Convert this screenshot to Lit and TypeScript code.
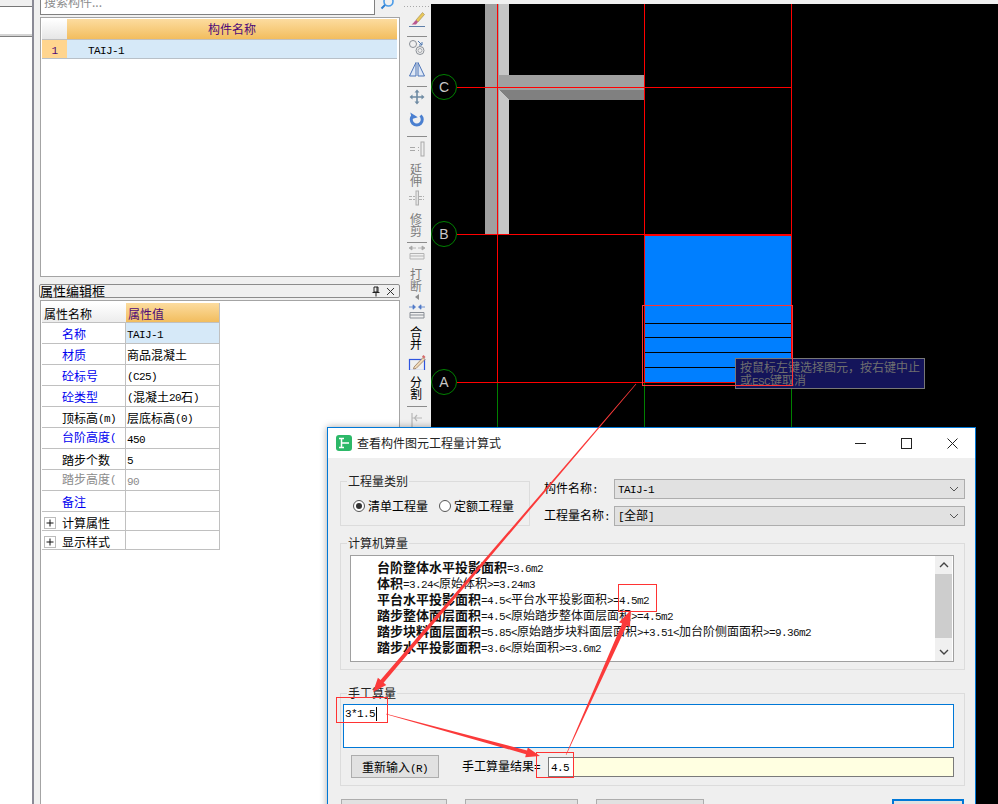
// app.ts - stair quantity dialog over the CAD drawing view
import { LitElement, html, css, svg } from 'lit';
import { customElement } from 'lit/decorators.js';

// the reference uses a half-width Latin next to 12px CJK, so ASCII runs get their own condensed mono span
const mix = (text: string) =>
  text.split(/([\x21-\x7e]+)/).map((part, i) => (i % 2 ? html`<span class="m">${part}</span>` : part));

interface PropRow {
  name: string;
  value?: string;
  tone?: 'blue' | 'gray' | 'black';
  up?: boolean;
  fold?: boolean;
  active?: boolean;
}

const PROPS: PropRow[] = [
  { name: '名称', value: 'TAIJ-1', tone: 'blue', active: true },
  { name: '材质', value: '商品混凝土', tone: 'blue' },
  { name: '砼标号', value: '(C25)', tone: 'blue' },
  { name: '砼类型', value: '(混凝土20石)', tone: 'blue' },
  { name: '顶标高(m)', value: '层底标高(0)' },
  { name: '台阶高度(', value: '450', tone: 'blue', up: true },
  { name: '踏步个数', value: '5' },
  { name: '踏步高度(', value: '90', tone: 'gray', up: true },
  { name: '备注', tone: 'blue' },
  { name: '计算属性', fold: true },
  { name: '显示样式', fold: true }
];

const LINES: [string, string][] = [
  ['台阶整体水平投影面积', '=3.6m2'],
  ['体积', '=3.24<原始体积>=3.24m3'],
  ['平台水平投影面积', '=4.5<平台水平投影面积>=4.5m2'],
  ['踏步整体面层面积', '=4.5<原始踏步整体面层面积>=4.5m2'],
  ['踏步块料面层面积', '=5.85<原始踏步块料面层面积>+3.51<加台阶侧面面积>=9.36m2'],
  ['踏步水平投影面积', '=3.6<原始面积>=3.6m2']
];

const icon = (body: unknown, h = 16) =>
  html`<svg class="ico" width="18" height=${h} viewBox="0 0 18 ${h}" fill="none">${body}</svg>`;

const ICONS = {
  brush: svg`<path d="M1 15.5H17" stroke="#5f7fa8"/><path d="M8 9L14.5 1.5L16.5 3.5L10 11Z" fill="#e9c85a" stroke="#a08a50" stroke-width=".6"/><path d="M8 9L10 11L8 13.5H3.5C5.5 12.5 6 10.5 8 9Z" fill="#b9578f"/>`,
  offset: svg`<circle cx="5" cy="5" r="3.5" stroke="#8a8f96"/><path d="M10 2L14 6M14 3V6H11" stroke="#4f78b0"/><circle cx="12" cy="11.5" r="4" stroke="#8a8f96"/><circle cx="12" cy="11.5" r="2" stroke="#a5a9ae"/>`,
  mirror: svg`<path d="M8 1.5V15H1.5Z" fill="#dfe8f6" stroke="#4b74b8"/><path d="M10 1.5V15H16.5Z" fill="#dfe8f6" stroke="#4b74b8"/>`,
  move: svg`<path d="M9 2V14M3 8H15" stroke="#6f8ba3" stroke-width="1.6"/><path d="M9 0.5L11.5 3.5H6.5ZM9 15.5L6.5 12.5H11.5ZM1.5 8L4.5 5.5V10.5ZM16.5 8L13.5 10.5V5.5Z" fill="#6f8ba3"/>`,
  rotate: svg`<path d="M12.5 4.5A5.5 5.5 0 1 1 5 4.5" stroke="#4a7fd0" stroke-width="3"/><path d="M3 1V7.5H9Z" fill="#4a7fd0" transform="rotate(-15 5 4)"/>`,
  extend: svg`<path d="M2 6.5H7M2 9.5H7M10 6.5H11M10 9.5H11" stroke="#a8a8a8"/><rect x="13" y="1" width="3" height="14" fill="#eee" stroke="#a8a8a8"/>`,
  trim: svg`<path d="M1 6.5H7M1 9.5H7M11 6.5H16M11 9.5H16" stroke="#b0b0b0" stroke-dasharray="3 1"/><rect x="8" y="1" width="2.5" height="14" fill="#e4e4e4" stroke="#b0b0b0"/>`,
  split: svg`<path d="M4 3H8M1 3L4 1V5ZM10 3H14M17 3L14 1V5Z" fill="#a8a8a8" stroke="#a8a8a8" stroke-width=".8"/><path d="M2 8.5H16V14H2ZM2 11H16" stroke="#b4b4b4"/>`,
  merge: svg`<path d="M1 3H6M17 3H12M7.5 3L5 .8V5.2ZM10.5 3L13 .8V5.2Z" fill="#4f78c8" stroke="#4f78c8" stroke-width=".8"/><path d="M2 8.5H16V14H2ZM2 11H16" stroke="#8a8f96"/>`,
  cut: svg`<rect x="1.5" y="5.5" width="15" height="11" stroke="#2f55e0" stroke-width="1.2"/><path d="M6 13L15 3.5L17 5.5L8 14.5L5.5 15Z" fill="#f0d9b8" stroke="#8a6a50" stroke-width=".7"/><path d="M14 2.5L15.5 1L17.5 3L16 4.5Z" fill="#d46a6a"/>`,
  stub: svg`<path d="M4 1V16M4 16H16M4 6H14M9 3L6.5 6L9 9" stroke="#b8b8b8" stroke-width="1.2"/>`
};

// tapered annotation arrow: a hairline at the tail that thickens up to the head
const arrow = (x1: number, y1: number, x2: number, y2: number, neck = 4, head = 11, len = 14) => {
  const l = Math.hypot(x2 - x1, y2 - y1);
  const dx = (x2 - x1) / l;
  const dy = (y2 - y1) / l;
  const nx = -dy;
  const ny = dx;
  const bx = x2 - dx * len;
  const by = y2 - dy * len;
  const p = (x: number, y: number, w: number) => `${x + (nx * w) / 2},${y + (ny * w) / 2}`;
  const pts = [
    p(x1, y1, 0.6),
    p(bx, by, neck),
    p(bx, by, head),
    `${x2},${y2}`,
    p(bx, by, -head),
    p(bx, by, -neck),
    p(x1, y1, -0.6)
  ].join(' ');
  return svg`<polygon points=${pts} fill="#fb3a3a"/>`;
};

@customElement('app-root')
export class AppRoot extends LitElement {
  static override styles = css`
    :host {
      display: block;
      position: relative;
      width: 998px;
      height: 804px;
      overflow: hidden;
      background: #fff;
      color: #000;
      font: 12px/14px 'Noto Sans CJK SC', 'Liberation Sans', sans-serif;
    }
    .m {
      font-family: 'Liberation Mono', 'Noto Sans CJK SC', monospace;
      font-size: 11px;
      letter-spacing: -0.6px;
    }
    .app {
      display: flex;
      height: 100%;
    }

    /* far left sliver of the next panel */
    .strip {
      width: 32px;
      flex: none;
    }
    .strip-top {
      height: 6px;
      background: #f0f0f0;
      border-bottom: 1px solid #777;
    }
    .strip-line {
      margin-top: 27px;
      height: 2px;
      background: #d4d4d4;
      border-bottom: 1px solid #808080;
    }

    /* left column */
    .side {
      width: 371px;
      flex: none;
      box-sizing: border-box;
      display: flex;
      flex-direction: column;
      padding: 0 3px 0 6px;
      background: #f0f0f0;
      border-left: 2px solid #8a8a96;
    }
    .search {
      display: flex;
      height: 15px;
      flex: none;
    }
    .search-input {
      flex: 1;
      box-sizing: border-box;
      overflow: hidden;
      background: #fff;
      border: 1px solid #808080;
      border-top: 0;
      padding-left: 3px;
      color: #8c8c8c;
      line-height: 14px;
    }
    .search-input span {
      display: block;
      margin-top: -5px;
    }
    .search-btn {
      width: 25px;
      overflow: hidden;
    }
    .list {
      height: 260px;
      flex: none;
      box-sizing: border-box;
      margin-top: 2px;
      padding: 1px 2px 1px 1px;
      background: #fff;
      border: 1px solid #a4a4a4;
    }
    .list-head,
    .list-row {
      display: grid;
      grid-template-columns: 25px 1fr;
    }
    .list-head {
      grid-template-rows: 21px;
    }
    .corner {
      background: linear-gradient(#fff, #e6e6e6);
      border-bottom: 1px solid #c0c0c0;
    }
    .gold {
      background: linear-gradient(#fcdc9f, #f2bd5e);
      color: #4d0a78;
      border-bottom: 1px solid #c0c0c0;
    }
    .list-head .gold {
      text-align: center;
      line-height: 20px;
    }
    .list-row {
      grid-template-rows: 19px;
    }
    .num,
    .name {
      box-sizing: border-box;
      overflow: hidden;
      line-height: 18px;
      border-bottom: 1px solid #b8c0c8;
    }
    .num {
      background: #ffd58f;
      color: #4d0a78;
      text-align: center;
    }
    .name {
      background: #d6e9f8;
      padding-left: 21px;
    }
    .prop-title {
      margin: 7px 0 0 -1px;
      height: 14px;
      flex: none;
      box-sizing: border-box;
      display: flex;
      align-items: center;
      padding-right: 3px;
      border: 1px solid #8c8c8c;
      border-radius: 2px;
      font-size: 13px;
    }
    .prop-title svg {
      margin-left: 4px;
    }
    .prop-title .grow {
      flex: 1;
    }
    .prop {
      flex: 1;
      margin-top: 2px;
      box-sizing: border-box;
      padding: 2px 0 0 1px;
      background: #fff;
      border: 1px solid #a4a4a4;
      border-bottom: 0;
    }
    .table {
      display: grid;
      grid-template-columns: 84px 94px;
      width: 178px;
    }
    .cell {
      box-sizing: border-box;
      height: 21px;
      line-height: 22px;
      border-bottom: 1px solid #c0c0c0;
      border-right: 1px solid #c0c0c0;
      padding-left: 1px;
      white-space: nowrap;
      overflow: hidden;
    }
    .cell .m {
      vertical-align: 1px;
    }
    .cell.key {
      padding-left: 20px;
    }
    .cell.head {
      height: 20px;
      line-height: 21px;
      padding-left: 2px;
      border-right: 0;
      background: linear-gradient(#fff, #ececec);
    }
    .cell.head.gold {
      background: linear-gradient(#fcdc9f, #f2bd5e);
      border-right: 1px solid #c0c0c0;
    }
    .cell.fold {
      height: 19px;
    }
    .cell.key.fold {
      display: flex;
      align-items: center;
      padding: 3px 0 0 2px;
      gap: 6px;
    }
    .plus {
      width: 12px;
      height: 12px;
      flex: none;
    }
    .blue {
      color: #0000f0;
    }
    .gray {
      color: #8c8c8c;
    }
    .cell.up {
      line-height: 17px;
    }
    .active {
      background: #d6e9f8;
    }

    /* vertical edit toolbar */
    .tools {
      width: 28px;
      flex: none;
      box-sizing: border-box;
      padding-top: 4px;
      display: flex;
      flex-direction: column;
      align-items: center;
      background: #f0f0f0;
    }
    .grip {
      height: 7px;
      width: 26px;
      flex: none;
      box-sizing: border-box;
      padding-top: 2px;
    }
    .grip i {
      display: block;
      height: 1px;
      background: repeating-linear-gradient(90deg, #a8a8a8 0 1px, transparent 1px 3px);
    }
    .sep {
      height: 6px;
      width: 20px;
      flex: none;
      display: flex;
      align-items: center;
    }
    .sep i {
      display: block;
      width: 100%;
      height: 1px;
      background: #8c8c8c;
    }
    .tool {
      display: flex;
      flex-direction: column;
      align-items: center;
      flex: none;
      line-height: 12px;
    }
    .tool .ico {
      display: block;
      margin: 0 0 0 -1px;
    }
    .slot {
      height: 22px;
      display: flex;
      align-items: center;
    }
    .off {
      color: #7c7c7c;
    }
    .mt2 {
      margin-top: 2px;
    }
    .mt3 {
      margin-top: 3px;
    }
    .mt4 {
      margin-top: 4px;
    }
    .words {
      display: flex;
      flex-direction: column;
      align-items: center;
      width: 14px;
      margin-left: -2px;
    }
    .words b {
      font-weight: 400;
      height: 12px;
    }
    .words.gap7 {
      margin-top: 7px;
    }
    .words.gap6 {
      margin-top: 6px;
    }
    .words.gap1 {
      margin-top: 1px;
    }
    .caret-down {
      width: 0;
      height: 0;
      margin-top: 2px;
      border-style: solid;
      border-width: 3px 4px 3px 0;
      border-color: transparent #8e8e8e transparent transparent;
    }

    /* drawing area */
    .canvas {
      flex: 1;
      position: relative;
      background: #f0f0f0;
      padding-top: 4px;
      box-sizing: border-box;
    }
    .canvas svg {
      display: block;
      background: #000;
    }
    .axis {
      font: 14px 'Liberation Sans', sans-serif;
      fill: #c8c8c8;
      text-anchor: middle;
    }
    .hint {
      position: absolute;
      left: 304px;
      top: 358px;
      width: 190px;
      height: 31px;
      box-sizing: border-box;
      padding: 1px 4px;
      background: #14145a;
      border: 1px solid #777;
      color: #6f6f6f;
      line-height: 13px;
      white-space: nowrap;
    }

    /* dialog window */
    .dialog {
      position: absolute;
      left: 327px;
      top: 427px;
      width: 649px;
      height: 400px;
      box-sizing: border-box;
      background: #efefef;
      border: 1px solid #0078d7;
      box-shadow: 0 0 7px rgba(0, 0, 0, 0.35);
    }
    .titlebar {
      height: 30px;
      display: flex;
      align-items: center;
      padding-left: 8px;
      background: #fff;
    }
    .title {
      margin-left: 5px;
      color: #222;
    }
    .controls {
      margin-left: auto;
      display: flex;
    }
    .controls span {
      width: 46px;
      height: 30px;
      display: flex;
      align-items: center;
      justify-content: center;
    }
    .body {
      padding: 16px 10px 0 12px;
    }
    .top {
      display: flex;
    }
    fieldset {
      margin: 0;
      padding: 0;
      min-width: 0;
      box-sizing: border-box;
      border: 1px solid #dcdcdc;
    }
    legend {
      padding: 0 1px;
      line-height: 14px;
      color: #222;
    }
    .kind {
      width: 190px;
      height: 52px;
      flex: none;
      display: flex;
      align-items: center;
      padding: 9px 0 10px 12px;
    }
    .kind legend {
      margin-left: -6px;
    }
    .radio {
      width: 12px;
      height: 12px;
      flex: none;
      box-sizing: border-box;
      border: 1px solid #555;
      border-radius: 50%;
      background: #fff;
      display: flex;
      align-items: center;
      justify-content: center;
      margin-right: 3px;
    }
    .radio i {
      width: 6px;
      height: 6px;
      border-radius: 50%;
      background: #333;
    }
    .kind .second {
      margin-left: 11px;
    }
    .picks {
      flex: 1;
      margin-left: 14px;
      padding-top: 5px;
      display: flex;
      flex-direction: column;
      gap: 7px;
    }
    .pick {
      display: flex;
      align-items: center;
      height: 20px;
    }
    .pick label {
      width: 70px;
      flex: none;
    }
    .select {
      flex: 1;
      height: 20px;
      box-sizing: border-box;
      display: flex;
      align-items: center;
      justify-content: space-between;
      padding: 0 5px 0 3px;
      background: #e1e1e1;
      border: 1px solid #adadad;
    }
    .calc {
      margin-top: 10px;
      width: 625px;
      height: 134px;
      padding: 5px 10px 0 9px;
    }
    .calc legend {
      margin-left: -3px;
    }
    .listbox {
      height: 107px;
      box-sizing: border-box;
      display: flex;
      background: #fff;
      border: 1px solid #a0a0a0;
    }
    .lines {
      flex: 1;
      padding: 3px 0 0 26px;
      line-height: 16px;
      white-space: nowrap;
    }
    .lines b {
      font-size: 13px;
      font-weight: 700;
    }
    .lines div {
      height: 16px;
      color: #111;
    }
    .scroll {
      width: 17px;
      margin-right: 1px;
      flex: none;
      display: flex;
      flex-direction: column;
      background: #f0f0f0;
    }
    .scroll .btn {
      height: 18px;
      display: flex;
      align-items: center;
      justify-content: center;
    }
    .scroll .thumb {
      height: 64px;
      background: #cdcdcd;
    }
    .scroll .track {
      flex: 1;
    }
    .manual {
      margin-top: 16px;
      width: 625px;
      height: 100px;
      padding: 4px 10px 0 2px;
    }
    .manual legend {
      margin-left: 4px;
    }
    .entry {
      height: 44px;
      box-sizing: border-box;
      background: #fff;
      border: 1px solid #0078d7;
      padding: 2px 0 0 1px;
      display: flex;
      align-items: flex-start;
      line-height: 14px;
    }
    .caret {
      width: 1px;
      height: 14px;
      margin-left: 1px;
      background: #000;
    }
    .result-row {
      margin-top: 7px;
      display: flex;
      align-items: flex-start;
      padding-left: 8px;
    }
    .btn-plain {
      width: 88px;
      height: 23px;
      box-sizing: border-box;
      background: #e1e1e1;
      border: 1px solid #adadad;
      text-align: center;
      line-height: 21px;
    }
    .result-label {
      margin-left: 23px;
      width: 86px;
      flex: none;
      line-height: 22px;
    }
    .result {
      flex: 1;
      margin-top: 2px;
      height: 20px;
      box-sizing: border-box;
      background: #ffffe1;
      border: 1px solid #7a7a7a;
      display: flex;
    }
    .result .val {
      width: 24px;
      padding-left: 2px;
      box-sizing: border-box;
      background: #fff;
      line-height: 15px;
    }
    .footer {
      margin-top: 13px;
      display: flex;
      padding-left: 1px;
    }
    .footer span {
      height: 30px;
      box-sizing: border-box;
      background: #e1e1e1;
      border: 1px solid #adadad;
    }
    .footer .w1 {
      width: 106px;
    }
    .footer .w2 {
      width: 113px;
      margin-left: 18px;
    }
    .footer .w3 {
      width: 108px;
      margin-left: 18px;
    }
    .footer .ok {
      width: 72px;
      margin-left: auto;
      margin-right: 1px;
      border: 2px solid #0078d7;
    }

    /* red markup drawn over the screenshot */
    .marks {
      position: absolute;
      left: 0;
      top: 0;
      pointer-events: none;
    }
  `;

  private renderSide() {
    return html`
      <div class="side">
        <div class="search">
          <div class="search-input"><span>搜索构件...</span></div>
          <div class="search-btn">
            <svg width="25" height="15" viewBox="0 0 25 15" fill="none">
              <circle cx="13.5" cy="1.5" r="4.5" stroke="#4a9be8" stroke-width="1.6" />
              <path d="M10 5L6.5 8.5" stroke="#2f7fd0" stroke-width="2" />
            </svg>
          </div>
        </div>
        <div class="list">
          <div class="list-head">
            <div class="corner"></div>
            <div class="gold">构件名称</div>
          </div>
          <div class="list-row">
            <div class="num"><span class="m">1</span></div>
            <div class="name">${mix('TAIJ-1')}</div>
          </div>
        </div>
        <div class="prop-title">
          <span>属性编辑框</span>
          <span class="grow"></span>
          <svg width="10" height="11" viewBox="0 0 10 11" fill="none">
            <path d="M3 1H7V6H3ZM1.5 6.5H8.5M5 6.5V10.5M6 1V6" stroke="#222" />
          </svg>
          <svg width="11" height="11" viewBox="0 0 11 11" fill="none">
            <path d="M2 2L9 9M9 2L2 9" stroke="#333" />
          </svg>
        </div>
        <div class="prop">
          <div class="table">
            <div class="cell head">属性名称</div>
            <div class="cell head gold">属性值</div>
            ${PROPS.map((row) => this.renderProp(row))}
          </div>
        </div>
      </div>
    `;
  }

  private renderProp(row: PropRow) {
    if (row.fold) {
      return html`
        <div class="cell key fold">
          <svg class="plus" viewBox="0 0 12 12" fill="none">
            <rect x=".5" y=".5" width="11" height="11" stroke="#bbb" />
            <path d="M2.5 6H9.5M6 2.5V9.5" stroke="#111" />
          </svg>
          <span>${row.name}</span>
        </div>
        <div class="cell fold"></div>
      `;
    }
    const tone = row.tone === 'blue' ? 'blue' : row.tone === 'gray' ? 'gray' : '';
    const valueTone = row.tone === 'gray' ? 'gray' : '';
    return html`
      <div class="cell key ${tone} ${row.up ? 'up' : ''}">${mix(row.name)}</div>
      <div class="cell ${valueTone} ${row.active ? 'active' : ''}">${mix(row.value ?? '')}</div>
    `;
  }

  private renderTool(name: keyof typeof ICONS, height = 22) {
    return html`<div class="tool slot" style="height:${height}px">${icon(ICONS[name], 16)}</div>`;
  }

  private renderWords(chars: string, gap: string, off = false) {
    return html`<div class="words ${gap} ${off ? 'off' : ''}">
      ${[...chars].map((c) => html`<b>${c}</b>`)}
    </div>`;
  }

  private renderTools() {
    const sep = html`<div class="sep"><i></i></div>`;
    return html`
      <div class="tools">
        <div class="grip"><i></i></div>
        ${this.renderTool('brush')} ${sep} ${this.renderTool('offset')} ${this.renderTool('mirror')}
        ${sep} ${this.renderTool('move')} ${this.renderTool('rotate')} ${sep}
        <div class="tool mt2">${this.renderTool('extend')}${this.renderWords('延伸', '', true)}</div>
        <div class="tool mt3">${this.renderTool('trim')}${this.renderWords('修剪', 'gap1', true)}</div>
        <div class="mt2">${sep}</div>
        <div class="tool">
          ${this.renderTool('split', 16)}${this.renderWords('打断', 'gap7', true)}
          <div class="caret-down"></div>
        </div>
        <div class="tool mt4">${this.renderTool('merge', 16)}${this.renderWords('合并', 'gap6')}</div>
        <div class="tool mt4">${this.renderTool('cut', 22)}${this.renderWords('分割', '')}</div>
        <div class="mt3">${sep}</div>
        <div class="tool mt3">${this.renderTool('stub', 16)}</div>
      </div>
    `;
  }

  private renderCanvas() {
    const redV = [497, 644, 791];
    const redH = [87, 234, 382];
    const axes: [string, number][] = [
      ['C', 87],
      ['B', 234],
      ['A', 382]
    ];
    return html`
      <div class="canvas">
        <svg width="567" height="800" viewBox="431 4 567 800">
          <g shape-rendering="crispEdges">
            <rect x="485" y="4" width="14" height="230" fill="#a0a0a0" />
            <rect x="499" y="4" width="10" height="230" fill="#c6c6c6" />
            <rect x="499" y="75" width="145" height="15" fill="#a0a0a0" />
            <polygon points="499,90 644,90 644,100 509,100" fill="#808080" />
            <rect x="645" y="235" width="147" height="147" fill="#007fff" />
            ${[323, 337, 352, 367].map(
              (y) => svg`<rect x="645" y=${y} width="146" height="1" fill="#000" />`
            )}
            ${redV.map(
              (x) => svg`
                <rect x=${x} y="4" width="1" height="378" fill="#f00" />
                <rect x=${x} y="383" width="1" height="60" fill="#008000" />
              `
            )}
            ${redH.map((y) => svg`<rect x="457" y=${y} width="335" height="1" fill="#f00" />`)}
            <rect x="644" y="234" width="148" height="2" fill="#f00" />
            <rect x="457" y="233.500" width="188" height="1.500" fill="#f00" />
          </g>
          ${axes.map(
            ([label, y]) => svg`
              <circle cx="444" cy=${y} r="12.500" stroke="#008000" fill="#000" />
              <text class="axis" x="444" y=${y + 5}>${label}</text>
            `
          )}
        </svg>
        <div class="hint">按鼠标左键选择图元，按右键中止<br />或<span class="m">ESC</span>键取消</div>
      </div>
    `;
  }

  private renderDialog() {
    const chevron = html`<svg width="10" height="6" viewBox="0 0 10 6" fill="none">
      <path d="M1 1L5 5L9 1" stroke="#555" />
    </svg>`;
    return html`
      <div class="dialog">
        <div class="titlebar">
          <svg width="16" height="16" viewBox="0 0 16 16" fill="none">
            <rect width="16" height="16" rx="3" fill="#2cb868" />
            <path d="M3 3.500H8M5.500 3.500V12.500M3 12.500H8M5.500 8H13" stroke="#fff" stroke-width="1.500" />
          </svg>
          <span class="title">查看构件图元工程量计算式</span>
          <div class="controls">
            <span>
              <svg width="11" height="11" viewBox="0 0 11 11"><path d="M0 5.500H11" stroke="#222" /></svg>
            </span>
            <span>
              <svg width="11" height="11" viewBox="0 0 11 11" fill="none">
                <rect x=".5" y=".5" width="10" height="10" stroke="#222" />
              </svg>
            </span>
            <span>
              <svg width="11" height="11" viewBox="0 0 11 11"><path d="M.5 .5L10.500 10.500M10.500 .5L.5 10.500" stroke="#222" /></svg>
            </span>
          </div>
        </div>
        <div class="body">
          <div class="top">
            <fieldset class="kind">
              <legend>工程量类别</legend>
              <span class="radio"><i></i></span>
              <span>清单工程量</span>
              <span class="radio second"></span>
              <span>定额工程量</span>
            </fieldset>
            <div class="picks">
              <div class="pick">
                <label>构件名称${mix(':')}</label>
                <div class="select"><span>${mix('TAIJ-1')}</span>${chevron}</div>
              </div>
              <div class="pick">
                <label>工程量名称${mix(':')}</label>
                <div class="select"><span>${mix('[')}全部${mix(']')}</span>${chevron}</div>
              </div>
            </div>
          </div>
          <fieldset class="calc">
            <legend>计算机算量</legend>
            <div class="listbox">
              <div class="lines">
                ${LINES.map(([name, rest]) => html`<div><b>${name}</b>${mix(rest)}</div>`)}
              </div>
              <div class="scroll">
                <div class="btn">
                  <svg width="10" height="6" viewBox="0 0 10 6" fill="none">
                    <path d="M1 5L5 1L9 5" stroke="#444" stroke-width="1.400" />
                  </svg>
                </div>
                <div class="thumb"></div>
                <div class="track"></div>
                <div class="btn">
                  <svg width="10" height="6" viewBox="0 0 10 6" fill="none">
                    <path d="M1 1L5 5L9 1" stroke="#444" stroke-width="1.400" />
                  </svg>
                </div>
              </div>
            </div>
          </fieldset>
          <fieldset class="manual">
            <legend>手工算量</legend>
            <div class="entry">${mix('3*1.5')}<i class="caret"></i></div>
            <div class="result-row">
              <div class="btn-plain">重新输入${mix('(R)')}</div>
              <div class="result-label">手工算量结果${mix('=')}</div>
              <div class="result"><span class="val">${mix('4.5')}</span></div>
            </div>
          </fieldset>
          <div class="footer">
            <span class="w1"></span>
            <span class="w2"></span>
            <span class="w3"></span>
            <span class="ok"></span>
          </div>
        </div>
      </div>
    `;
  }

  override render() {
    return html`
      <div class="app">
        <div class="strip">
          <div class="strip-top"></div>
          <div class="strip-line"></div>
        </div>
        ${this.renderSide()} ${this.renderTools()} ${this.renderCanvas()}
      </div>
      ${this.renderDialog()}
      <svg class="marks" width="998" height="804" viewBox="0 0 998 804" fill="none">
        <rect x="642.500" y="305.500" width="150" height="80" stroke="#f33" />
        <rect x="618.500" y="584.500" width="38" height="27" stroke="#f33" />
        <rect x="336.500" y="697.500" width="51" height="25" stroke="#f33" />
        <rect x="536.500" y="752.500" width="37" height="25" stroke="#f33" />
        ${arrow(636, 384, 373, 692)}
        ${arrow(386, 714, 540, 756, 4, 10, 14)}
        ${arrow(566, 755, 631, 610, 5, 12, 16)}
      </svg>
    `;
  }
}

declare global {
  interface HTMLElementTagNameMap {
    'app-root': AppRoot;
  }
}
